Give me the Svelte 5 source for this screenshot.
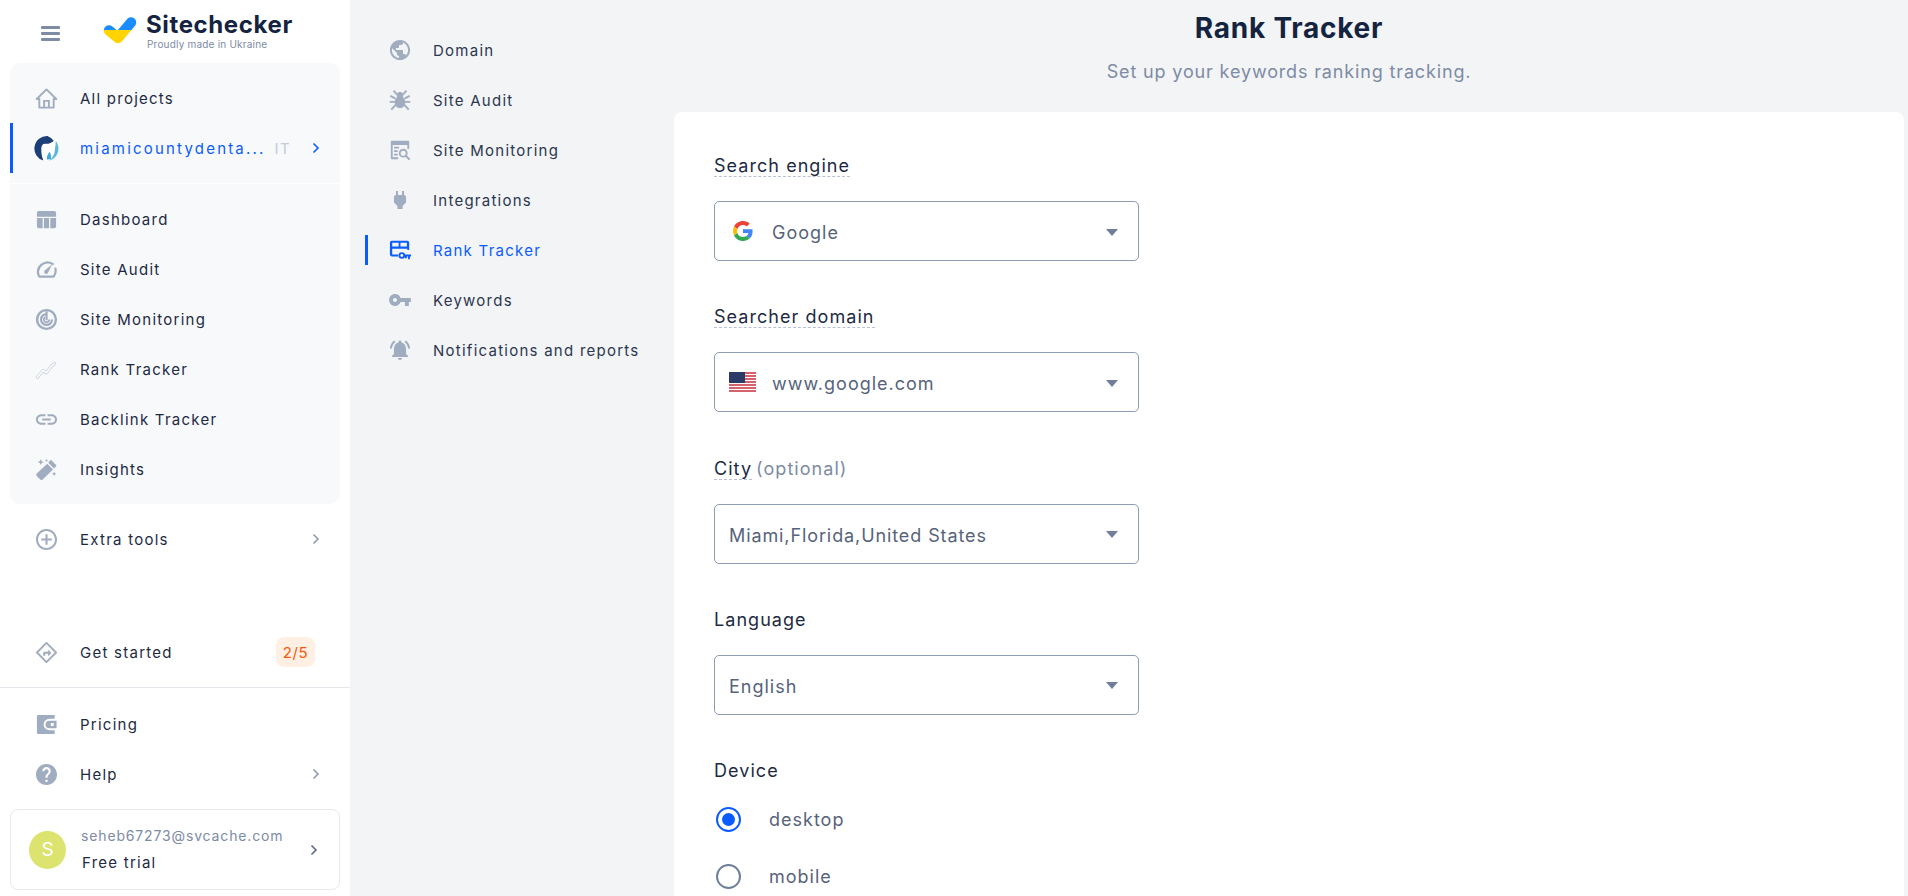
<script>
  const P = {
    home: '<path d="M12 2.500 1.800 12.500H4.500V21.500H19.500V12.500H22.200z" fill="none" stroke="currentColor" stroke-width="2" stroke-linejoin="round"/><path d="M9.500 21.500v-7h5v7" fill="none" stroke="currentColor" stroke-width="2"/>',
    table: '<path d="M2 5a2 2 0 0 1 2-2h16a2 2 0 0 1 2 2v4H2zM2 10.500h6V21H4a2 2 0 0 1-2-2zM9.300 10.500h5.400V21H9.300zM16 10.500h6V19a2 2 0 0 1-2 2h-4z"/>',
    gauge: '<path d="M18.500 6.300A10 10 0 0 0 3.800 18.200 1.500 1.500 0 0 0 5 19.500h14a1.500 1.500 0 0 0 1.200-1.300A10 10 0 0 0 21.300 11" fill="none" stroke="currentColor" stroke-width="2.300" stroke-linecap="round"/><path d="M18 6.500l-4.300 8.300a2.100 2.100 0 1 1-3-2.200z"/>',
    radar: '<circle cx="12" cy="12" r="9.800" fill="none" stroke="currentColor" stroke-width="2.500"/><path d="M12 6.300A5.700 5.700 0 1 0 17.700 12" fill="none" stroke="currentColor" stroke-width="2.300"/><path d="M11 3.500h2.200V12A1.100 1.100 0 0 1 11 12z"/><path d="M10.500 9.700A2.800 2.800 0 1 0 14.800 12" fill="none" stroke="currentColor" stroke-width="1.800"/>',
    rank: '<path d="M2.500 20 8.500 13l3.500 2.500L17 8.500l3.500-2.500" fill="none" stroke="currentColor" stroke-width="3.300" stroke-linecap="round" stroke-linejoin="round"/><path d="M2.500 20 8.500 13l3.500 2.500L17 8.500l3.500-2.500" fill="none" stroke="#f8f9fb" stroke-width="1.900" stroke-linecap="round" stroke-linejoin="round"/>',
    link: '<path transform="translate(-1.200 -1.200) scale(1.100)" d="M3.900 12c0-1.710 1.390-3.100 3.100-3.100h4V7H7c-2.760 0-5 2.240-5 5s2.240 5 5 5h4v-1.900H7c-1.710 0-3.100-1.390-3.100-3.100zM8 13h8v-2H8v2zm9-6h-4v1.900h4c1.710 0 3.100 1.390 3.100 3.100s-1.390 3.100-3.100 3.100h-4V17h4c2.760 0 5-2.240 5-5s-2.240-5-5-5z"/>',
    wand: '<path d="M16.500 1.800 22 7.300a1 1 0 0 1 0 1.400L19.800 11 13.800 5l2.700-3.200zM12.800 6l6 6L8 22.500a1.800 1.800 0 0 1-2.500 0l-3.700-3.700a1.800 1.800 0 0 1 0-2.500z"/><path d="M6 1l.9 2.300L9.200 4.200l-2.300.9L6 7.400l-.9-2.300L2.800 4.200l2.300-.9zM20 14l.7 1.800 1.800.7-1.800.7L20 19l-.7-1.800-1.800-.7 1.800-.7zM12 1l.5 1.100 1.100.5-1.100.5-.5 1.100-.5-1.100-1.100-.5 1.100-.5z"/>',
    plus: '<path transform="translate(-1.200 -1.200) scale(1.100)" d="M13 7h-2v4H7v2h4v4h2v-4h4v-2h-4V7zm-1-5C6.480 2 2 6.480 2 12s4.480 10 10 10 10-4.480 10-10S17.520 2 12 2zm0 18c-4.410 0-8-3.590-8-8s3.590-8 8-8 8 3.590 8 8-3.590 8-8 8z"/>',
    diamond: '<path d="M12 2 22 12 12 22 2 12z" fill="none" stroke="currentColor" stroke-width="2" stroke-linejoin="round"/><path d="M8.500 15.500V12.800a1.500 1.500 0 0 1 1.500-1.500h3.500V9l3.800 3.400-3.800 3.400v-2.400H10.700v2.100z"/>',
    wallet: '<path fill-rule="evenodd" d="M3.500 2h17v4H15a6 6 0 0 0 0 12h5.500v4h-17A1.500 1.500 0 0 1 2 20.500v-17A1.500 1.500 0 0 1 3.500 2zM15 8h7.500v8H15a4 4 0 0 1 0-8zm1.500 2.500v3h3v-3z"/>',
    help: '<path transform="translate(-1.200 -1.200) scale(1.100)" d="M12 2C6.480 2 2 6.480 2 12s4.480 10 10 10 10-4.480 10-10S17.520 2 12 2zm1 17h-2v-2h2v2zm2.070-7.750l-.9.920C13.450 12.900 13 13.500 13 15h-2v-.5c0-1.100.450-2.100 1.170-2.830l1.240-1.260c.370-.360.590-.860.590-1.410 0-1.100-.9-2-2-2s-2 .9-2 2H8c0-2.210 1.790-4 4-4s4 1.790 4 4c0 .880-.360 1.680-.930 2.250z"/>',
    globe: '<path transform="translate(-1.200 -1.200) scale(1.100)" d="M12 2C6.480 2 2 6.480 2 12s4.480 10 10 10 10-4.480 10-10S17.520 2 12 2zm-1 17.930c-3.950-.490-7-3.850-7-7.930 0-.620.080-1.210.210-1.790L9 15v1c0 1.100.9 2 2 2v1.930zm6.900-2.540c-.260-.810-1-1.390-1.900-1.390h-1v-3c0-.550-.450-1-1-1H8v-2h2c.550 0 1-.450 1-1V7h2c1.100 0 2-.9 2-2v-.410c2.930 1.190 5 4.060 5 7.410 0 2.080-.8 3.970-2.100 5.390z"/>',
    bug: '<ellipse cx="12" cy="14.500" rx="5.800" ry="6.500"/><circle cx="12" cy="7" r="3.600"/><path d="M8.500 6 5 1.800M15.500 6 19 1.800M7 10.500 1.500 7.500M17 10.500l5.500-3M7 14H.8M17 14h6.200M7.500 17 2.500 22.500M16.500 17l5 5.500" fill="none" stroke="currentColor" stroke-width="2"/>',
    mon: '<path d="M2 3a1 1 0 0 1 1-1h18a1 1 0 0 1 1 1v8h-2V6.500H4V20h6v2H3a1 1 0 0 1-1-1z"/><path d="M5.500 8.500H11v1.800H5.500zM5.500 12.300H9.500v1.800H5.500zM5.500 16.100H9.500v1.800H5.500z"/><circle cx="15.500" cy="15.500" r="3.800" fill="none" stroke="currentColor" stroke-width="2"/><path d="m18.300 18.300 4.200 4.200" stroke="currentColor" stroke-width="2.300"/>',
    plug: '<path transform="translate(-1.200 -1.200) scale(1.100)" d="M16.010 7L16 3h-2v4h-4V3H8v4h-.01C7 6.990 6 7.990 6 8.990v5.490L9.500 18v3h5v-3l3.500-3.510v-5.500c0-1-1-2-1.990-1.990z"/>',
    tracker: '<path fill-rule="evenodd" d="M3 2h17a2 2 0 0 1 2 2v8h-2v-1.500H3.500V17H10v2H3a2 2 0 0 1-2-2V4a2 2 0 0 1 2-2zm.5 2.200v4.100h7V4.200zm9 0v4.100h7V4.200z"/><circle cx="14" cy="18" r="2.600" fill="none" stroke="currentColor" stroke-width="2"/><path d="M16.500 17h7.500v2.200h-1.200V22h-2v-2.800h-1.300V21h-2v-1.800h-1z"/>',
    key: '<path transform="translate(-1 -1) scale(1.080)" d="M12.650 10C11.830 7.670 9.610 6 7 6c-3.310 0-6 2.690-6 6s2.690 6 6 6c2.610 0 4.830-1.670 5.650-4H17v4h4v-4h2v-4H12.650zM7 14c-1.100 0-2-.9-2-2s.9-2 2-2 2 .9 2 2-.9 2-2 2z"/>',
    bell: '<path transform="translate(-1.200 -1.200) scale(1.100)" d="M7.580 4.080L6.150 2.650C3.750 4.480 2.170 7.300 2.030 10.500h2c.150-2.650 1.510-4.970 3.550-6.420zm12.390 6.420h2c-.150-3.200-1.730-6.020-4.120-7.850l-1.420 1.430c2.020 1.450 3.390 3.770 3.540 6.420zM18 11c0-3.070-1.640-5.640-4.500-6.320V4c0-.830-.670-1.500-1.500-1.500s-1.500.670-1.500 1.500v.680C7.630 5.360 6 7.920 6 11v5l-2 2v1h16v-1l-2-2v-5zm-6 11c.140 0 .270-.010.400-.040.650-.140 1.180-.580 1.440-1.180.100-.240.150-.5.150-.78h-4c.010 1.100.9 2 2.010 2z"/>'
  };
  const top = [
    ['table', 'Dashboard'], ['gauge', 'Site Audit'], ['radar', 'Site Monitoring'],
    ['rank', 'Rank Tracker', 'light'], ['link', 'Backlink Tracker'], ['wand', 'Insights']
  ];
  const sub = [
    ['globe', 'Domain'], ['bug', 'Site Audit'], ['mon', 'Site Monitoring'], ['plug', 'Integrations'],
    ['tracker', 'Rank Tracker', 'active'], ['key', 'Keywords'], ['bell', 'Notifications and reports']
  ];
</script>

{#snippet icon(name, cls = '')}
  <svg class="ico {cls}" viewBox="0 0 24 24" fill="currentColor" aria-hidden="true">{@html P[name]}</svg>
{/snippet}
{#snippet chev(cls = '')}
  <svg class="chev {cls}" viewBox="0 0 8 12" aria-hidden="true"><path d="M1.500 1.500 6 6l-4.500 4.500" fill="none" stroke="currentColor" stroke-width="1.600"/></svg>
{/snippet}
{#snippet caret()}
  <svg class="caret" viewBox="0 0 12 7" aria-hidden="true"><path d="M0 0h12L6 7z" fill="currentColor"/></svg>
{/snippet}

<div class="page">
  <aside class="side">
    <header class="brand">
      <div class="burger"><i></i><i></i><i></i></div>
      <svg class="logo" viewBox="0 0 34 28" aria-hidden="true">
        <defs><linearGradient id="ua" gradientUnits="userSpaceOnUse" x1="0" y1="0" x2="0" y2="28"><stop offset="0.500" stop-color="#1a8cff"/><stop offset="0.500" stop-color="#ffd400"/></linearGradient></defs>
        <path d="M6 14.500 15 22 28 6.500" fill="none" stroke="url(#ua)" stroke-width="10.500" stroke-linecap="round" stroke-linejoin="round"/>
      </svg>
      <div class="brandtext">
        <div class="bname">Sitechecker</div>
        <div class="bsub">Proudly made in Ukraine</div>
      </div>
    </header>

    <div class="panel">
      <div class="item">{@render icon('home')}<span>All projects</span></div>
      <div class="item project">
        <svg class="ico tooth" viewBox="0 0 24 24" aria-hidden="true">
          <circle cx="12" cy="12" r="12" fill="#fff"/>
          <path d="M13 .1A12 12 0 0 0 9 23.600C7.500 20 7 16.500 7 13 6.800 9 8.500 7 11.500 7.500c2.500.3 5-1 7.500-2.700A12 12 0 0 0 13 .1z" fill="#1d3f77"/>
          <path d="M20.800 4.500A12 12 0 0 1 14 23.800c3-1.800 5.500-4.800 6-9.800.3-3.500 1-6 .8-9.500z" fill="#5bb6dd"/>
          <path d="M12.500 22.500c-.5-3 .8-5.500 2.500-7.500 1.300 2.500 1.800 5 1.300 6.800-1 .7-2.500.9-3.800.7z" fill="#3da9dc"/>
        </svg>
        <span class="pname">miamicountydenta...</span><span class="tag">IT</span>{@render chev('blue')}
      </div>
      <div class="rule"></div>
      {#each top as [ic, label, cls]}
        <div class="item">{@render icon(ic, cls || '')}<span>{label}</span></div>
      {/each}
    </div>

    <div class="item extra">{@render icon('plus')}<span>Extra tools</span>{@render chev()}</div>

    <div class="lower">
      <div class="item started">{@render icon('diamond')}<span>Get started</span><b class="badge">2/5</b></div>
      <div class="sep"></div>
      <div class="item">{@render icon('wallet')}<span>Pricing</span></div>
      <div class="item">{@render icon('help')}<span>Help</span>{@render chev()}</div>
      <div class="user">
        <div class="avatar">S</div>
        <div class="who">
          <div class="mail">seheb67273@svcache.com</div>
          <div class="plan">Free trial</div>
        </div>
        {@render chev('dark')}
      </div>
    </div>
  </aside>

  <nav class="subnav">
    {#each sub as [ic, label, cls]}
      <div class="subitem {cls || ''}">{@render icon(ic)}<span>{label}</span></div>
    {/each}
  </nav>

  <main class="main">
    <h1>Rank Tracker</h1>
    <p class="lead">Set up your keywords ranking tracking.</p>
    <section class="card">
      <div class="field">
        <div class="lab"><span class="dash">Search engine</span></div>
        <div class="select">
          <svg class="g" viewBox="0 0 48 48" aria-hidden="true">
            <path fill="#EA4335" d="M24 9.500c3.540 0 6.710 1.220 9.210 3.600l6.850-6.850C35.900 2.380 30.470 0 24 0 14.620 0 6.510 5.380 2.560 13.220l7.980 6.190C12.430 13.720 17.740 9.500 24 9.500z"/>
            <path fill="#4285F4" d="M46.980 24.550c0-1.570-.150-3.090-.380-4.550H24v9.020h12.940c-.580 2.960-2.260 5.480-4.780 7.180l7.730 6c4.510-4.180 7.090-10.360 7.090-17.650z"/>
            <path fill="#FBBC05" d="M10.530 28.590c-.480-1.450-.760-2.990-.760-4.590s.270-3.140.760-4.590l-7.980-6.190C.920 16.460 0 20.120 0 24c0 3.880.920 7.540 2.560 10.780l7.970-6.190z"/>
            <path fill="#34A853" d="M24 48c6.480 0 11.930-2.130 15.890-5.810l-7.730-6c-2.150 1.450-4.920 2.300-8.160 2.300-6.260 0-11.570-4.220-13.470-9.910l-7.980 6.190C6.510 42.620 14.620 48 24 48z"/>
          </svg>
          <span class="val">Google</span>{@render caret()}
        </div>
      </div>
      <div class="field">
        <div class="lab"><span class="dash">Searcher domain</span></div>
        <div class="select">
          <svg class="flag" viewBox="0 0 27 20" aria-hidden="true">
            <rect width="27" height="20" fill="#fff"/>
            <path d="M0 1h27M0 4h27M0 7h27M0 10h27M0 13h27M0 16h27M0 19h27" stroke="#c8313e" stroke-width="1.500"/>
            <rect width="16" height="11" fill="#2b3a67"/>
          </svg>
          <span class="val">www.google.com</span>{@render caret()}
        </div>
      </div>
      <div class="field">
        <div class="lab"><span class="dash">City</span><span class="opt">(optional)</span></div>
        <div class="select plain"><span class="val city">Miami,Florida,United States</span>{@render caret()}</div>
      </div>
      <div class="field">
        <div class="lab"><span>Language</span></div>
        <div class="select plain"><span class="val">English</span>{@render caret()}</div>
      </div>
      <div class="lab device"><span>Device</span></div>
      <div class="radio on"><i></i><span>desktop</span></div>
      <div class="radio"><i></i><span>mobile</span></div>
    </section>
  </main>
</div>

<style>
  :global(body) { margin: 0; background: #f3f4f6; }
  .page {
    display: flex; width: 1908px; height: 896px; overflow: hidden;
    font-family: Inter, "Open Sans", sans-serif; font-size: 15px; color: #1d2a44; letter-spacing: 1.25px;
  }
  .side { width: 350px; flex: none; background: #fff; display: flex; flex-direction: column; padding: 0 10px; box-sizing: border-box; }
  .brand { height: 63px; flex: none; display: flex; align-items: flex-start; }
  .burger { width: 19px; margin: 26px 0 0 31px; display: flex; flex-direction: column; gap: 3.5px; }
  .burger i { height: 2.500px; border-radius: 1px; background: #7d8ba5; display: block; }
  .logo { width: 34px; height: 28px; margin: 16px 0 0 43px; }
  .brandtext { margin: 11px 0 0 9px; }
  .bname { font-size: 24px; line-height: 28px; font-weight: 700; color: #14233f; letter-spacing: 0.62px; }
  .bsub { font-size: 10px; line-height: 12px; color: #7d8ba5; margin: -1px 0 0 1px; letter-spacing: 0.2px; }
  .panel { background: #f8f9fb; border-radius: 10px; padding: 10px 0; }
  .item { height: 50px; display: flex; align-items: center; padding: 0 20px 0 25px; position: relative; }
  .item > span:first-of-type { margin-left: 22px; }
  .ico { width: 22px; height: 22px; flex: none; color: #a0acbf; }
  .item .ico { width: 23px; height: 23px; }
  .item .ico.tooth { width: 25px; height: 25px; margin: 0 -1px; }
  .ico.light { color: #c6cdd9; }
  .chev { width: 8px; height: 12px; margin-left: auto; color: #8d9bb3; flex: none; }
  .chev.blue { color: #0a5cff; }
  .chev.dark { color: #5c6b85; margin-right: 21px; }
  .project { color: #0a5cff; }
  .project::before { content: ""; position: absolute; left: 0; top: 0; bottom: 0; width: 3px; background: #0a5cff; }
  .pname { white-space: nowrap; letter-spacing: 2.2px; }
  .tag { color: #c5ccd8; margin-left: 9px; letter-spacing: 1.5px; }
  .rule { height: 1px; background: #fff; margin: 10px 0; }
  .extra { margin-top: 10px; }
  .lower { margin-top: auto; padding-bottom: 6px; }
  .started { padding-right: 25px; }
  .badge { margin-left: auto; background: #fff0e3; color: #f2590d; font-weight: 400; height: 30px; width: 39px; display: flex; align-items: center; justify-content: center; border-radius: 8px; letter-spacing: 0.6px; }
  .sep { height: 1px; background: #e4e7ec; margin: 10px -10px 11px; }
  .user { height: 81px; box-sizing: border-box; margin-top: 10px; border: 1px solid #e6e9ee; border-radius: 8px; display: flex; align-items: center; padding-left: 18px; }
  .avatar { width: 37px; height: 38px; border-radius: 50%; background: #dde36f; color: #fff; font-size: 19px; letter-spacing: 0; display: flex; align-items: center; justify-content: center; flex: none; }
  .who { margin-left: 15px; }
  .mail { font-size: 14px; color: #7d8ba5; line-height: 20px; letter-spacing: 0.85px; }
  .plan { line-height: 20px; margin-top: 7px; margin-left: 1px; }
  .subnav { width: 324px; flex: none; box-sizing: border-box; padding: 25px 0 0 15px; }
  .subitem { height: 50px; display: flex; align-items: center; padding-left: 24px; position: relative; color: #2b374f; }
  .subitem span { margin-left: 22px; }
  .subitem.active { color: #0a5cff; }
  .subitem.active .ico { color: #0a5cff; }
  .subitem.active::before { content: ""; position: absolute; left: 0; top: 10px; bottom: 10px; width: 3px; background: #0a5cff; }
  .main { width: 1230px; flex: none; }
  h1 { margin: 0; text-align: center; font-size: 28px; line-height: 34px; font-weight: 700; color: #14233f; padding-top: 11px; letter-spacing: 0.75px; }
  .lead { margin: 15px 0 0; text-align: center; font-size: 18px; line-height: 24px; color: #7d8ba5; letter-spacing: 0.85px; }
  .card { margin-top: 28px; background: #fff; border-radius: 8px 8px 0 0; padding: 40px 40px 0; height: 800px; box-sizing: border-box; }
  .field { margin-bottom: 42.33px; }
  .lab { font-size: 18px; line-height: 21px; color: #1d2a44; letter-spacing: 1.05px; height: 25px; margin-bottom: 24px; display: flex; align-items: flex-start; }
  .lab > span { padding-top: 3px; }
  .dash { border-bottom: 1px dashed #b9c1cf; }
  .opt { color: #7d8ba5; margin-left: 4px; }
  .select { width: 425px; height: 60px; box-sizing: border-box; border: 1px solid #8d9bb3; border-radius: 5px; display: flex; align-items: center; padding: 0 20px 0 14px; position: relative; font-size: 18px; color: #56637b; letter-spacing: 1px; }
  .g { width: 20px; height: 20px; margin-left: 4px; flex: none; }
  .flag { width: 27px; height: 20px; flex: none; }
  .val { margin-left: 16px; padding-top: 3px; }
  .g + .val { margin-left: 19px; }
  .plain .val { margin-left: 0; }
  .val.city { letter-spacing: 0.9px; }
  .caret { width: 12px; height: 7px; margin: 2px 0 0 auto; color: #6f7f9a; flex: none; }
  .device { margin: 0 0 9px; }
  .radio { height: 57px; display: flex; align-items: center; font-size: 18px; color: #56637b; padding-left: 2px; letter-spacing: 1px; }
  .radio i { width: 25px; height: 25px; box-sizing: border-box; border: 2px solid #6f7f9a; border-radius: 50%; display: block; flex: none; position: relative; }
  .radio span { margin-left: 28px; }
  .radio.on i { border-color: #0a5cff; }
  .radio.on i::after { content: ""; position: absolute; inset: 4px; border-radius: 50%; background: #0a5cff; }
</style>
